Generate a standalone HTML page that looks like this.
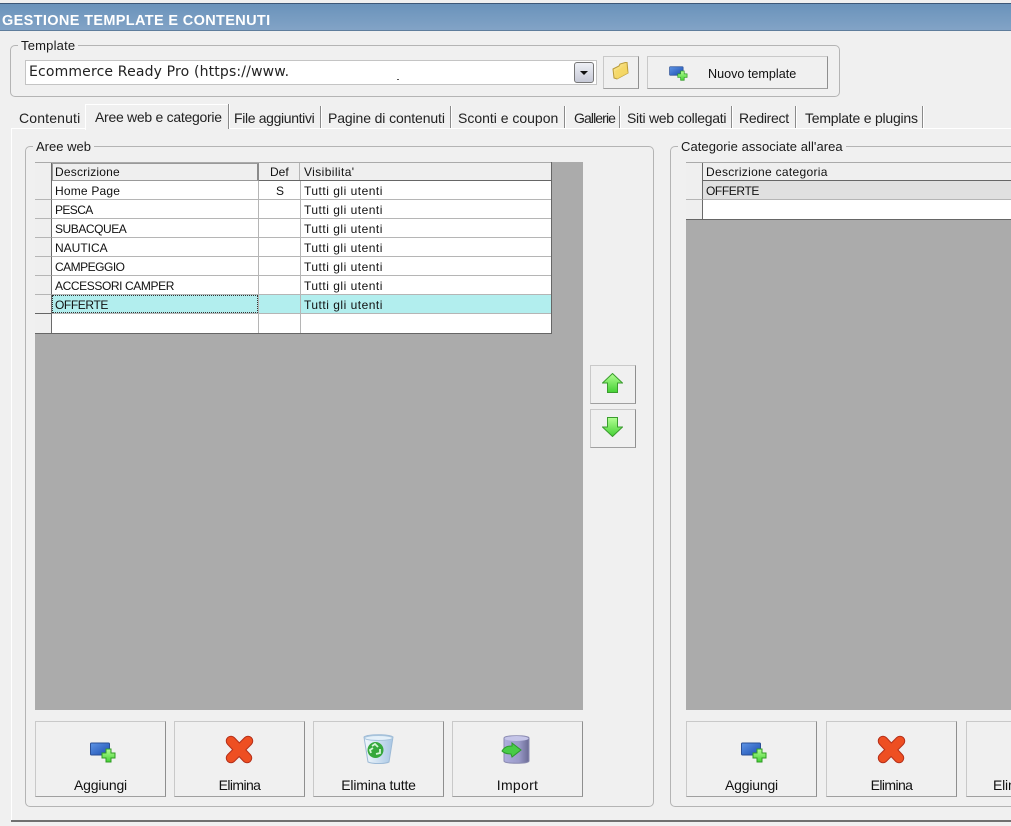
<!DOCTYPE html>
<html><head><meta charset="utf-8">
<style>
html,body{margin:0;padding:0;background:#f0f0f0}
body{width:1011px;height:826px;position:relative;overflow:hidden;font-family:"Liberation Sans",sans-serif;font-size:13px;color:#111}
div,span,svg{position:absolute;box-sizing:border-box}
.t{white-space:nowrap}
.title{left:0;top:3px;width:1011px;height:28px;background:linear-gradient(#6a93bb,#82a3c6);border-top:1px solid #3d5878;border-bottom:1px solid #5f7d9c}
.group{border:1px solid #b4b4b4;border-radius:5px}
.leg{background:#f0f0f0;padding:0 3px;line-height:15px;height:15px;font-size:13px;color:#1a1a1a}
.btn{background:#f0f0f0;border:1px solid #c9c9c9;border-right:1px solid #8f8f8f;border-bottom:1px solid #a0a0a0}
.lab{left:0;right:0;text-align:center;font-size:14px;letter-spacing:-.2px;color:#111;white-space:nowrap}
.tab{top:110px;font-size:14px;letter-spacing:-.28px;line-height:16px;color:#222;white-space:nowrap}
.sep{top:106px;width:2px;height:22px;background:#8a8a8a;border-right:1px solid #fff}
.g{font-size:12px;line-height:18px;height:18px;color:#111;white-space:nowrap}
.v{letter-spacing:.5px}
.rh{background:#efefef;border-right:1px solid #6a6a6a;border-bottom:1px solid #b5b5b5}
</style></head><body>
<svg width="0" height="0" style="left:0;top:0">
<defs>
<linearGradient id="bl" x1="0" y1="0" x2="1" y2="1"><stop offset="0" stop-color="#5e95e6"/><stop offset="1" stop-color="#1c4eb0"/></linearGradient>
<linearGradient id="gr" x1="0" y1="0" x2="0" y2="1"><stop offset="0" stop-color="#b4ff94"/><stop offset="1" stop-color="#44d034"/></linearGradient>
<linearGradient id="db" x1="0" y1="0" x2="1" y2="0"><stop offset="0" stop-color="#aeaedd"/><stop offset=".6" stop-color="#9a9ac8"/><stop offset="1" stop-color="#6a6a94"/></linearGradient>
<linearGradient id="bk" x1="0" y1="0" x2="1" y2="0"><stop offset="0" stop-color="#f3f9fd"/><stop offset="1" stop-color="#a8c6e4"/></linearGradient>
<linearGradient id="fd" x1="0" y1="0" x2="1" y2="1"><stop offset="0" stop-color="#fff0a0"/><stop offset="1" stop-color="#e8c040"/></linearGradient>
<symbol id="add" viewBox="0 0 26 21"><rect x="0.5" y="1" width="19" height="12" rx="1" fill="url(#bl)" stroke="#2a4f96"/><path d="M16 7h5v4h4v5h-4v4h-5v-4h-4v-5h4z" fill="url(#gr)" stroke="#2f9a24"/></symbol>
<symbol id="del" viewBox="0 0 30 29"><path d="M7 6L23 23M24 6L7 23" fill="none" stroke="#b5301a" stroke-width="10.500" stroke-linecap="round"/><path d="M7 6L23 23M24 6L7 23" fill="none" stroke="#ee4f22" stroke-width="8.500" stroke-linecap="round"/></symbol>
<symbol id="bin" viewBox="0 0 31 31"><path d="M1 3c4-3 25-3 29 0l-4 25c-4 2-17 2-21 0z" fill="url(#bk)" stroke="#9dbad6"/><ellipse cx="15.500" cy="4" rx="14" ry="2.500" fill="#e4f0f9" stroke="#a8c4dc"/><circle cx="12.500" cy="16" r="8" fill="#36a83c"/><path d="M9 12l3-2 3 3M17 15l0 4-4 1M8 19l-1-3 3-2" fill="none" stroke="#d5f5d5" stroke-width="1.800"/></symbol>
<symbol id="dbi" viewBox="0 0 29 29"><path d="M3 3c0-3 25-3 25 0v23c0 3-25 3-25 0z" fill="url(#db)" stroke="#8a8ab0"/><ellipse cx="15.500" cy="3.500" rx="12" ry="2.500" fill="#c5c5e8"/><path d="M1 16C4 11 8 11 11 11V8l9 7-9 7-1-3C6 19 3 18 1 16z" fill="#48cc48" stroke="#2d9a2d"/></symbol>
<symbol id="up" viewBox="0 0 21 20"><path d="M10.500.5l10 9.500h-5v9.500h-10V10h-5z" fill="url(#gr)" stroke="#3a9c2e"/></symbol>
<symbol id="dn" viewBox="0 0 21 20"><path d="M5.500.5h10V10h5l-10 9.500L.5 10h5z" fill="url(#gr)" stroke="#3a9c2e"/></symbol>
</defs></svg>

<div class="title"></div>
<div class="t" style="left:2px;top:13px;font-size:14.500px;font-weight:bold;color:#fff;line-height:17px;letter-spacing:.35px">GESTIONE TEMPLATE E CONTENUTI</div>

<!-- Template group -->
<div class="group" style="left:10px;top:45px;width:830px;height:52px"></div>
<div class="leg t" style="left:18px;top:38px;letter-spacing:.2px">Template</div>
<div style="left:25px;top:60px;width:572px;height:25px;background:#fff;border:1px solid #c4c4c4"></div>
<div class="t" style="left:29px;top:64px;font-family:'DejaVu Sans',sans-serif;font-size:14px;line-height:17px;letter-spacing:.16px;color:#222">Ecommerce Ready Pro (https://www.</div>
<div style="left:397px;top:79px;width:2px;height:1px;background:#555"></div>
<div style="left:574px;top:62px;width:20px;height:21px;background:linear-gradient(#eef0f6,#c6c9d6);border:1px solid #777;border-radius:3px"></div>
<div style="left:580px;top:71px;width:0;height:0;border-left:4px solid transparent;border-right:4px solid transparent;border-top:4px solid #111"></div>
<div class="btn" style="left:603px;top:56px;width:36px;height:33px"></div>
<svg style="left:612px;top:62px" width="17" height="18" viewBox="0 0 17 18"><path d="M1 7l6-3 1-2 7-2 1 11-11 6-3-1z" fill="url(#fd)" stroke="#b89a3a"/><path d="M3 9l11-5 2 7-11 6z" fill="#f5d868" opacity=".8"/></svg>
<div class="btn" style="left:647px;top:56px;width:181px;height:33px"></div>
<svg style="left:669px;top:66px" width="19" height="15"><use href="#add" width="19" height="15"/></svg>
<div class="t" style="left:708px;top:67px;font-size:12.600px;line-height:15px;color:#111">Nuovo template</div>

<!-- Tabs -->
<div style="left:11px;top:128px;width:1000px;height:693px;border-left:1px solid #fff;border-top:1px solid #fff;background:#f0f0f0"></div>
<div style="left:85px;top:104px;width:143px;height:26px;background:#f0f0f0;border-top:1px solid #fff;border-left:1px solid #fff"></div>
<div class="tab" style="left:19px;letter-spacing:.16px">Contenuti</div>
<div class="tab" style="left:95px;top:109px">Aree web e categorie</div>
<div class="tab" style="left:234px;letter-spacing:-.35px">File aggiuntivi</div>
<div class="tab" style="left:328px;letter-spacing:-.12px">Pagine di contenuti</div>
<div class="tab" style="left:458px;letter-spacing:-.01px">Sconti e coupon</div>
<div class="tab" style="left:574px;letter-spacing:-.9px">Gallerie</div>
<div class="tab" style="left:627px">Siti web collegati</div>
<div class="tab" style="left:739px">Redirect</div>
<div class="tab" style="left:805px;letter-spacing:-.22px">Template e plugins</div>
<div class="sep" style="left:228px;top:104px;height:25px"></div>
<div class="sep" style="left:320px"></div>
<div class="sep" style="left:450px"></div>
<div class="sep" style="left:564px"></div>
<div class="sep" style="left:619px"></div>
<div class="sep" style="left:731px"></div>
<div class="sep" style="left:795px"></div>
<div class="sep" style="left:922px"></div>
<div style="left:11px;top:820px;width:1000px;height:2px;background:#707070"></div>

<!-- Aree web group -->
<div class="group" style="left:25px;top:146px;width:629px;height:661px"></div>
<div class="leg t" style="left:33px;top:139px">Aree web</div>
<div style="left:35px;top:162px;width:548px;height:548px;background:#ababab"></div>
<div style="left:35px;top:162px;width:517px;height:172px;background:#fff;border-bottom:1px solid #666;border-right:1px solid #666"></div>
<!-- header -->
<div style="left:35px;top:162px;width:516px;height:19px;background:#efefef;border-bottom:1px solid #666;border-top:1px solid #aaa"></div>
<div style="left:52px;top:163px;width:207px;height:18px;border:1px solid #999;border-right:2px solid #8a8a8a"></div>
<div style="left:299px;top:163px;width:1px;height:17px;background:#b5b5b5"></div>
<!-- row header -->
<div class="rh" style="left:35px;top:163px;width:17px;height:18px;border-bottom:0"></div>
<div class="rh" style="left:35px;top:181px;width:17px;height:19px"></div>
<div class="rh" style="left:35px;top:200px;width:17px;height:19px"></div>
<div class="rh" style="left:35px;top:219px;width:17px;height:19px"></div>
<div class="rh" style="left:35px;top:238px;width:17px;height:19px"></div>
<div class="rh" style="left:35px;top:257px;width:17px;height:19px"></div>
<div class="rh" style="left:35px;top:276px;width:17px;height:19px"></div>
<div class="rh" style="left:35px;top:295px;width:17px;height:19px;border-bottom:1px solid #666"></div>
<div class="rh" style="left:35px;top:314px;width:17px;height:19px;border-bottom:0"></div>
<!-- lines -->
<div style="left:52px;top:199px;width:499px;height:1px;background:#b5b5b5"></div>
<div style="left:52px;top:218px;width:499px;height:1px;background:#b5b5b5"></div>
<div style="left:52px;top:237px;width:499px;height:1px;background:#b5b5b5"></div>
<div style="left:52px;top:256px;width:499px;height:1px;background:#b5b5b5"></div>
<div style="left:52px;top:275px;width:499px;height:1px;background:#b5b5b5"></div>
<div style="left:52px;top:294px;width:499px;height:1px;background:#b5b5b5"></div>
<div style="left:52px;top:295px;width:499px;height:19px;background:#b2eeee"></div>
<div style="left:52px;top:295px;width:206px;height:18px;border:1px dotted #333"></div>
<div style="left:258px;top:181px;width:1px;height:152px;background:#b5b5b5"></div>
<div style="left:300px;top:181px;width:1px;height:152px;background:#b5b5b5"></div>
<div style="left:52px;top:313px;width:499px;height:1px;background:#b5b5b5"></div>
<!-- text -->
<div class="g" style="left:55px;top:163px;letter-spacing:.2px">Descrizione</div><div class="g" style="left:270px;top:163px">Def</div><div class="g" style="left:304px;top:163px;letter-spacing:.4px">Visibilita'</div>
<div class="g" style="left:55px;top:182px;letter-spacing:.2px">Home Page</div><div class="g" style="left:276px;top:182px">S</div><div class="g v" style="left:304px;top:182px">Tutti gli utenti</div>
<div class="g" style="left:55px;top:201px;letter-spacing:-.6px">PESCA</div><div class="g v" style="left:304px;top:201px">Tutti gli utenti</div>
<div class="g" style="left:55px;top:220px;letter-spacing:-.45px">SUBACQUEA</div><div class="g v" style="left:304px;top:220px">Tutti gli utenti</div>
<div class="g" style="left:55px;top:239px">NAUTICA</div><div class="g v" style="left:304px;top:239px">Tutti gli utenti</div>
<div class="g" style="left:55px;top:258px;letter-spacing:-.5px">CAMPEGGIO</div><div class="g v" style="left:304px;top:258px">Tutti gli utenti</div>
<div class="g" style="left:55px;top:277px;letter-spacing:-.4px">ACCESSORI CAMPER</div><div class="g v" style="left:304px;top:277px">Tutti gli utenti</div>
<div class="g" style="left:55px;top:296px;letter-spacing:-.4px">OFFERTE</div><div class="g v" style="left:304px;top:296px">Tutti gli utenti</div>

<!-- Arrows -->
<div class="btn" style="left:590px;top:365px;width:46px;height:39px"></div>
<svg style="left:602px;top:373px" width="21" height="20"><use href="#up" width="21" height="20"/></svg>
<div class="btn" style="left:590px;top:409px;width:46px;height:39px"></div>
<svg style="left:602px;top:417px" width="21" height="20"><use href="#dn" width="21" height="20"/></svg>

<!-- Buttons left -->
<div class="btn" style="left:35px;top:721px;width:131px;height:76px"><span class="lab" style="top:55px">Aggiungi</span></div>
<svg style="left:90px;top:742px" width="26" height="21"><use href="#add" width="26" height="21"/></svg>
<div class="btn" style="left:174px;top:721px;width:131px;height:76px"><span class="lab" style="top:55px;letter-spacing:-.6px">Elimina</span></div>
<svg style="left:224px;top:735px" width="30" height="29"><use href="#del" width="30" height="29"/></svg>
<div class="btn" style="left:313px;top:721px;width:131px;height:76px"><span class="lab" style="top:55px">Elimina tutte</span></div>
<svg style="left:363px;top:734px" width="31" height="31"><use href="#bin" width="31" height="31"/></svg>
<div class="btn" style="left:452px;top:721px;width:131px;height:76px"><span class="lab" style="top:55px;letter-spacing:.3px">Import</span></div>
<svg style="left:501px;top:735px" width="29" height="29"><use href="#dbi" width="29" height="29"/></svg>

<!-- Right group -->
<div class="group" style="left:670px;top:146px;width:341px;height:661px;border-right:0;border-radius:5px 0 0 5px"></div>
<div class="leg t" style="left:678px;top:139px;letter-spacing:.06px">Categorie associate all'area</div>
<div style="left:686px;top:162px;width:325px;height:548px;background:#ababab"></div>
<div style="left:686px;top:162px;width:325px;height:58px;background:#fff;border-bottom:1px solid #666"></div>
<div style="left:686px;top:162px;width:325px;height:19px;background:#efefef;border-bottom:1px solid #666;border-top:1px solid #aaa"></div>
<div style="left:702px;top:181px;width:309px;height:19px;background:#e0e0e0;border-bottom:1px solid #b5b5b5"></div>
<div class="rh" style="left:686px;top:163px;width:17px;height:18px;border-bottom:0"></div>
<div class="rh" style="left:686px;top:181px;width:17px;height:19px"></div>
<div class="rh" style="left:686px;top:200px;width:17px;height:19px;border-bottom:0"></div>
<div class="g" style="left:706px;top:163px;letter-spacing:.3px">Descrizione categoria</div>
<div class="g" style="left:706px;top:182px;letter-spacing:-.4px">OFFERTE</div>

<div class="btn" style="left:686px;top:721px;width:131px;height:76px"><span class="lab" style="top:55px">Aggiungi</span></div>
<svg style="left:741px;top:742px" width="26" height="21"><use href="#add" width="26" height="21"/></svg>
<div class="btn" style="left:826px;top:721px;width:131px;height:76px"><span class="lab" style="top:55px;letter-spacing:-.6px">Elimina</span></div>
<svg style="left:876px;top:735px" width="30" height="29"><use href="#del" width="30" height="29"/></svg>
<div class="btn" style="left:966px;top:721px;width:45px;height:76px;border-right:0;overflow:hidden"><span class="t" style="left:26px;top:55px;font-size:14px;letter-spacing:-.2px;color:#111">Elimina tutte</span></div>
</body></html>
